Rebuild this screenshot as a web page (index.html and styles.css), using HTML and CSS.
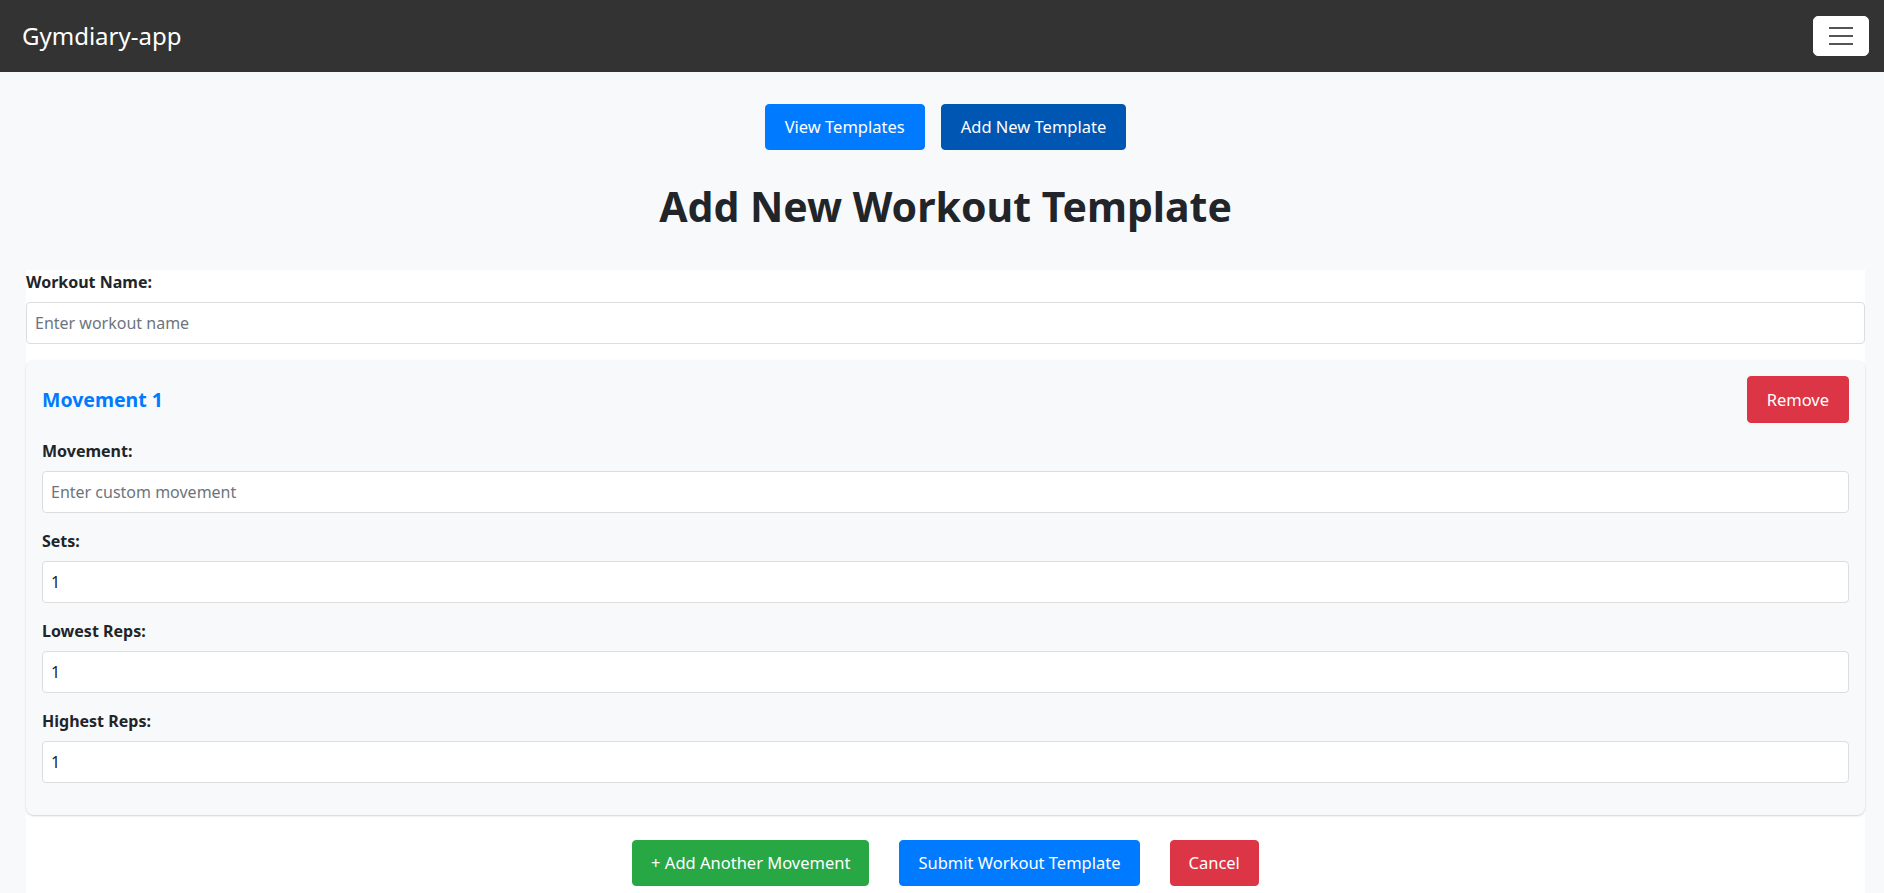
FILE: index.html
```html
<!DOCTYPE html>
<html lang="en">
<head>
<meta charset="utf-8">
<title>Gymdiary-app</title>
<link rel="stylesheet" href="styles.css">
</head>
<body>
<nav class="navbar">
  <a class="brand" href="#">Gymdiary-app</a>
  <button class="toggler" type="button" aria-label="Toggle navigation">
    <svg width="24" height="24" viewBox="0 0 24 24"><path d="M0 4h24M0 12h24M0 20h24" stroke="#555" stroke-width="2" fill="none"/></svg>
  </button>
</nav>
<main class="page">
  <div class="tabs">
    <button class="btn btn-blue">View Templates</button>
    <button class="btn btn-dark-blue">Add New Template</button>
  </div>
  <h1 class="title">Add New Workout Template</h1>
  <form class="panel">
    <div class="group">
      <label class="label">Workout Name:</label>
      <input class="input" type="text" placeholder="Enter workout name">
    </div>
    <div class="card">
      <div class="card-head">
        <h3 class="card-title">Movement 1</h3>
        <button type="button" class="btn btn-red">Remove</button>
      </div>
      <div class="group">
        <label class="label">Movement:</label>
        <input class="input" type="text" placeholder="Enter custom movement">
      </div>
      <div class="group">
        <label class="label">Sets:</label>
        <input class="input" type="number" value="1">
      </div>
      <div class="group">
        <label class="label">Lowest Reps:</label>
        <input class="input" type="number" value="1">
      </div>
      <div class="group">
        <label class="label">Highest Reps:</label>
        <input class="input" type="number" value="1">
      </div>
    </div>
    <div class="actions">
      <button type="button" class="btn btn-green">+ Add Another Movement</button>
      <button type="button" class="btn btn-blue">Submit Workout Template</button>
      <button type="button" class="btn btn-red">Cancel</button>
    </div>
  </form>
</main>
</body>
</html>
```
FILE: styles.css
```css
* { box-sizing: border-box; }
html, body { margin: 0; padding: 0; }
body {
  background: #f8f9fa;
  font-family: "Noto Sans", "Open Sans", sans-serif;
  font-size: 16px;
  line-height: 1.5;
  color: #212529;
}
.navbar {
  background: #333333;
  height: 72px;
  padding: 0 15px 0 22px;
  display: flex;
  align-items: center;
  justify-content: space-between;
}
.brand {
  color: #fff;
  text-decoration: none;
  font-size: 24px;
  line-height: 1;
}
.toggler {
  width: 56px;
  height: 40px;
  background: #fff;
  border: 1px solid #fff;
  border-radius: 5px;
  display: flex;
  align-items: center;
  justify-content: center;
  padding: 0;
}
.toggler svg { display: block; }
.page {
  padding: 32px 19px 0 26px;
}
.tabs {
  display: flex;
  justify-content: center;
  gap: 16px;
}
.btn {
  font-family: inherit;
  font-size: 16.5px;
  line-height: 24px;
  padding: 10px 19px;
  border: 1px solid transparent;
  border-radius: 4px;
  color: #fff;
  cursor: pointer;
}
.btn-blue { background: #007bff; border-color: #007bff; }
.btn-dark-blue { background: #0056b3; border-color: #0056b3; }
.btn-red { background: #dc3545; border-color: #dc3545; }
.btn-green { background: #28a745; border-color: #28a745; }
.title {
  margin: 32px 0 40px;
  text-align: center;
  font-size: 41px;
  line-height: 48px;
  font-weight: 700;
  color: #212529;
}
.panel {
  background: #fff;
  padding-bottom: 24px;
}
.group { margin-bottom: 16px; }
.label {
  display: block;
  font-weight: 700;
  margin-bottom: 8px;
  line-height: 24px;
}
.input {
  display: block;
  width: 100%;
  height: 42px;
  padding: 8px;
  font-family: inherit;
  font-size: 16px;
  line-height: 24px;
  color: #212529;
  background: #fff;
  border: 1px solid #ddd;
  border-radius: 4px;
}
.input::placeholder { color: #6c757d; }
.input::-webkit-inner-spin-button, .input::-webkit-outer-spin-button { -webkit-appearance: none; margin: 0; }
.card {
  background: #f8f9fa;
  border-radius: 8px;
  padding: 16px 16px 16px 16px;
  box-shadow: 0 1px 2px rgba(0, 0, 0, 0.18);
  margin-bottom: 25px;
}
.card-head {
  display: flex;
  justify-content: space-between;
  align-items: center;
  margin-bottom: 16px;
}
.card-title {
  margin: 0;
  font-size: 19.5px;
  font-weight: 700;
  color: #007bff;
}
.card-head .btn { padding: 11px 19px 10px; }
.actions {
  display: flex;
  justify-content: center;
  gap: 30px;
}
.actions .btn { padding: 10px 18px; }
```
